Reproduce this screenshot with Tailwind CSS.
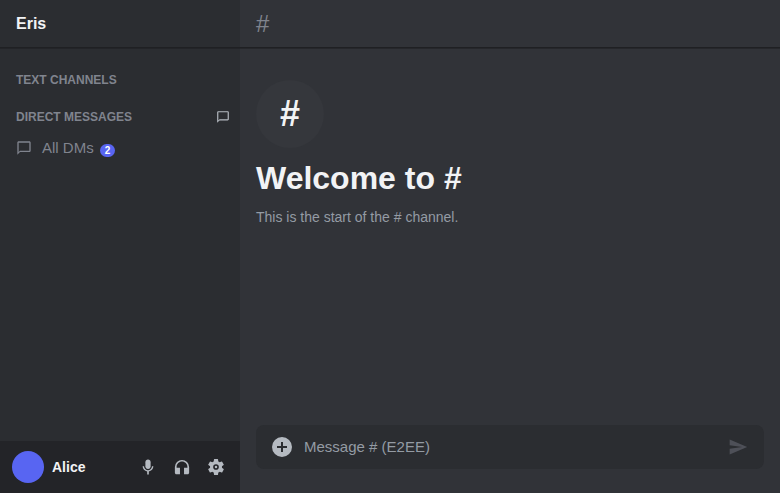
<!DOCTYPE html>
<html lang="en">
<head>
  <meta charset="UTF-8" />
  <meta name="viewport" content="width=device-width, initial-scale=1.0"/>
  <title>Eris</title>
  <script src="https://cdn.jsdelivr.net/npm/@tailwindcss/browser@4"></script>
</head>
<body class="flex h-screen overflow-hidden bg-[#313338] text-[#f2f3f5] font-['Liberation_Sans',Arial,sans-serif]">

  <!-- Sidebar -->
  <aside class="w-60 shrink-0 flex flex-col bg-[#2b2d31]">
    <header class="h-12 shrink-0 px-4 flex items-center border-b border-[#1f2023] shadow-[0_1px_0_#232428]">
      <h1 class="text-base font-bold">Eris</h1>
    </header>

    <nav class="flex-1 pt-6 text-[#80848e]">
      <h2 class="px-4 text-xs leading-4 font-bold">TEXT CHANNELS</h2>

      <div class="mt-5 pl-4 pr-2 flex items-center justify-between">
        <h2 class="text-xs leading-4 font-bold">DIRECT MESSAGES</h2>
        <button type="button" aria-label="New message" class="p-0.5 text-[#b5bac1] hover:text-white cursor-pointer">
          <svg class="size-3.5" viewBox="0 0 24 24" fill="currentColor"><path d="M20 2H4c-1.100 0-2 .9-2 2v18l4-4h14c1.100 0 2-.9 2-2V4c0-1.100-.9-2-2-2zm0 14H6l-2 2V4h16v12z"/></svg>
        </button>
      </div>

      <a href="#" class="mt-1.5 px-4 h-8 flex items-center hover:text-white">
        <svg class="size-4 mr-2.5" viewBox="0 0 24 24" fill="currentColor"><path d="M20 2H4c-1.100 0-2 .9-2 2v18l4-4h14c1.100 0 2-.9 2-2V4c0-1.100-.9-2-2-2zm0 14H6l-2 2V4h16v12z"/></svg>
        <span class="text-[15px] leading-5">All DMs</span>
        <span class="ml-1.5 mt-1 px-[5px] rounded-full bg-[#5865f2] text-white text-[10px] leading-[13px] font-bold">2</span>
      </a>
    </nav>

    <footer class="h-13 shrink-0 pl-3 pr-2 flex items-center bg-[#232428]">
      <div class="size-8 rounded-full bg-[#5865f2]"></div>
      <span class="ml-2 flex-1 text-sm leading-5 font-bold">Alice</span>
      <div class="flex gap-0.5 text-[#b5bac1]">
        <button type="button" aria-label="Mute" class="size-8 flex items-center justify-center rounded hover:bg-[#35373c]">
          <svg class="size-[18px]" viewBox="0 0 24 24" fill="currentColor"><path d="M12 14.500c2 0 3.500-1.500 3.500-3.500V5.500C15.500 3.500 14 2 12 2S8.500 3.500 8.500 5.500V11c0 2 1.500 3.500 3.500 3.500z"/><path d="M17.300 11c0 3-2.540 5.300-5.300 5.300S6.700 14 6.700 11H4.800c0 3.500 2.800 6.400 6.100 6.900V22h2.200v-4.100c3.300-.5 6.100-3.400 6.100-6.900h-1.900z"/></svg>
        </button>
        <button type="button" aria-label="Deafen" class="size-8 flex items-center justify-center rounded hover:bg-[#35373c]">
          <svg class="size-[18px]" viewBox="0 0 24 24" fill="currentColor"><path d="M12 2.500a9.500 9.500 0 0 0-9.500 9.500v7.500c0 1.100.9 2 2 2H9.300v-8.500H4.800v-1c0-3.900 3.200-7.200 7.200-7.200s7.200 3.300 7.200 7.200v1h-4.500v8.500h4.800c1.100 0 2-.9 2-2V12A9.500 9.500 0 0 0 12 2.500z"/></svg>
        </button>
        <button type="button" aria-label="Settings" class="size-8 flex items-center justify-center rounded hover:bg-[#35373c]">
          <svg class="size-5" viewBox="0 0 24 24" fill="currentColor"><path fill-rule="evenodd" d="M19.140 12.940c.04-.3.060-.61.060-.94s-.02-.64-.07-.94l2.030-1.580a.49.49 0 0 0 .12-.61l-1.920-3.320a.49.49 0 0 0-.59-.22l-2.390.96a7 7 0 0 0-1.620-.94l-.36-2.540a.48.48 0 0 0-.48-.41h-3.840a.47.47 0 0 0-.47.41l-.36 2.540a7.200 7.200 0 0 0-1.620.94l-2.390-.96a.48.48 0 0 0-.59.22L2.740 8.870a.47.47 0 0 0 .12.61l2.030 1.580a6 6 0 0 0 0 1.880l-2.030 1.580a.49.49 0 0 0-.12.610l1.920 3.320c.12.22.37.29.59.22l2.390-.96c.5.38 1.030.7 1.620.94l.36 2.540c.05.24.24.41.48.41h3.840c.24 0 .44-.17.47-.41l.36-2.540a7 7 0 0 0 1.620-.94l2.390.96c.22.080.47 0 .59-.22l1.920-3.320a.47.47 0 0 0-.12-.61l-2.010-1.580zM12 15.400a3.400 3.400 0 1 1 0-6.800 3.400 3.400 0 0 1 0 6.800z"/><circle cx="12" cy="12" r="1.500"/></svg>
        </button>
      </div>
    </footer>
  </aside>

  <!-- Chat -->
  <main class="flex-1 min-w-0 flex flex-col">
    <header class="h-12 shrink-0 px-4 flex items-center border-b border-[#1f2023] shadow-[0_1px_0_#26272b]">
      <span class="text-2xl text-[#80848e]">#</span>
    </header>

    <section class="flex-1 px-4 pt-8">
      <div class="size-17 rounded-full bg-[#35373c] flex items-center justify-center text-4xl font-bold">#</div>
      <h2 class="mt-2.5 text-[32px] leading-10 font-bold">Welcome to #</h2>
      <p class="mt-2 text-sm leading-[22px] text-[#949ba4]">This is the start of the # channel.</p>
    </section>

    <form class="mx-4 mb-6 h-11 px-4 flex items-center rounded-lg bg-[#2b2d31]">
      <button type="button" aria-label="Add attachment" class="text-[#b5bac1]">
        <svg class="size-5" viewBox="0 0 20 20" fill="currentColor"><path fill-rule="evenodd" d="M10 0a10 10 0 1 0 0 20 10 10 0 0 0 0-20zM9 5h2v4h4v2h-4v4H9v-4H5V9h4z"/></svg>
      </button>
      <input type="text" aria-label="Message" placeholder="Message # (E2EE)" class="mx-3 flex-1 min-w-0 text-[15px] leading-5 placeholder:text-[#949ba4] focus:outline-none">
      <button type="submit" aria-label="Send" class="text-[#4e5058]">
        <svg class="size-5" viewBox="0 0 24 24" fill="currentColor"><path d="M2 21l21-9L2 3v7l15 2-15 2z"/></svg>
      </button>
    </form>
  </main>

</body>
</html>
